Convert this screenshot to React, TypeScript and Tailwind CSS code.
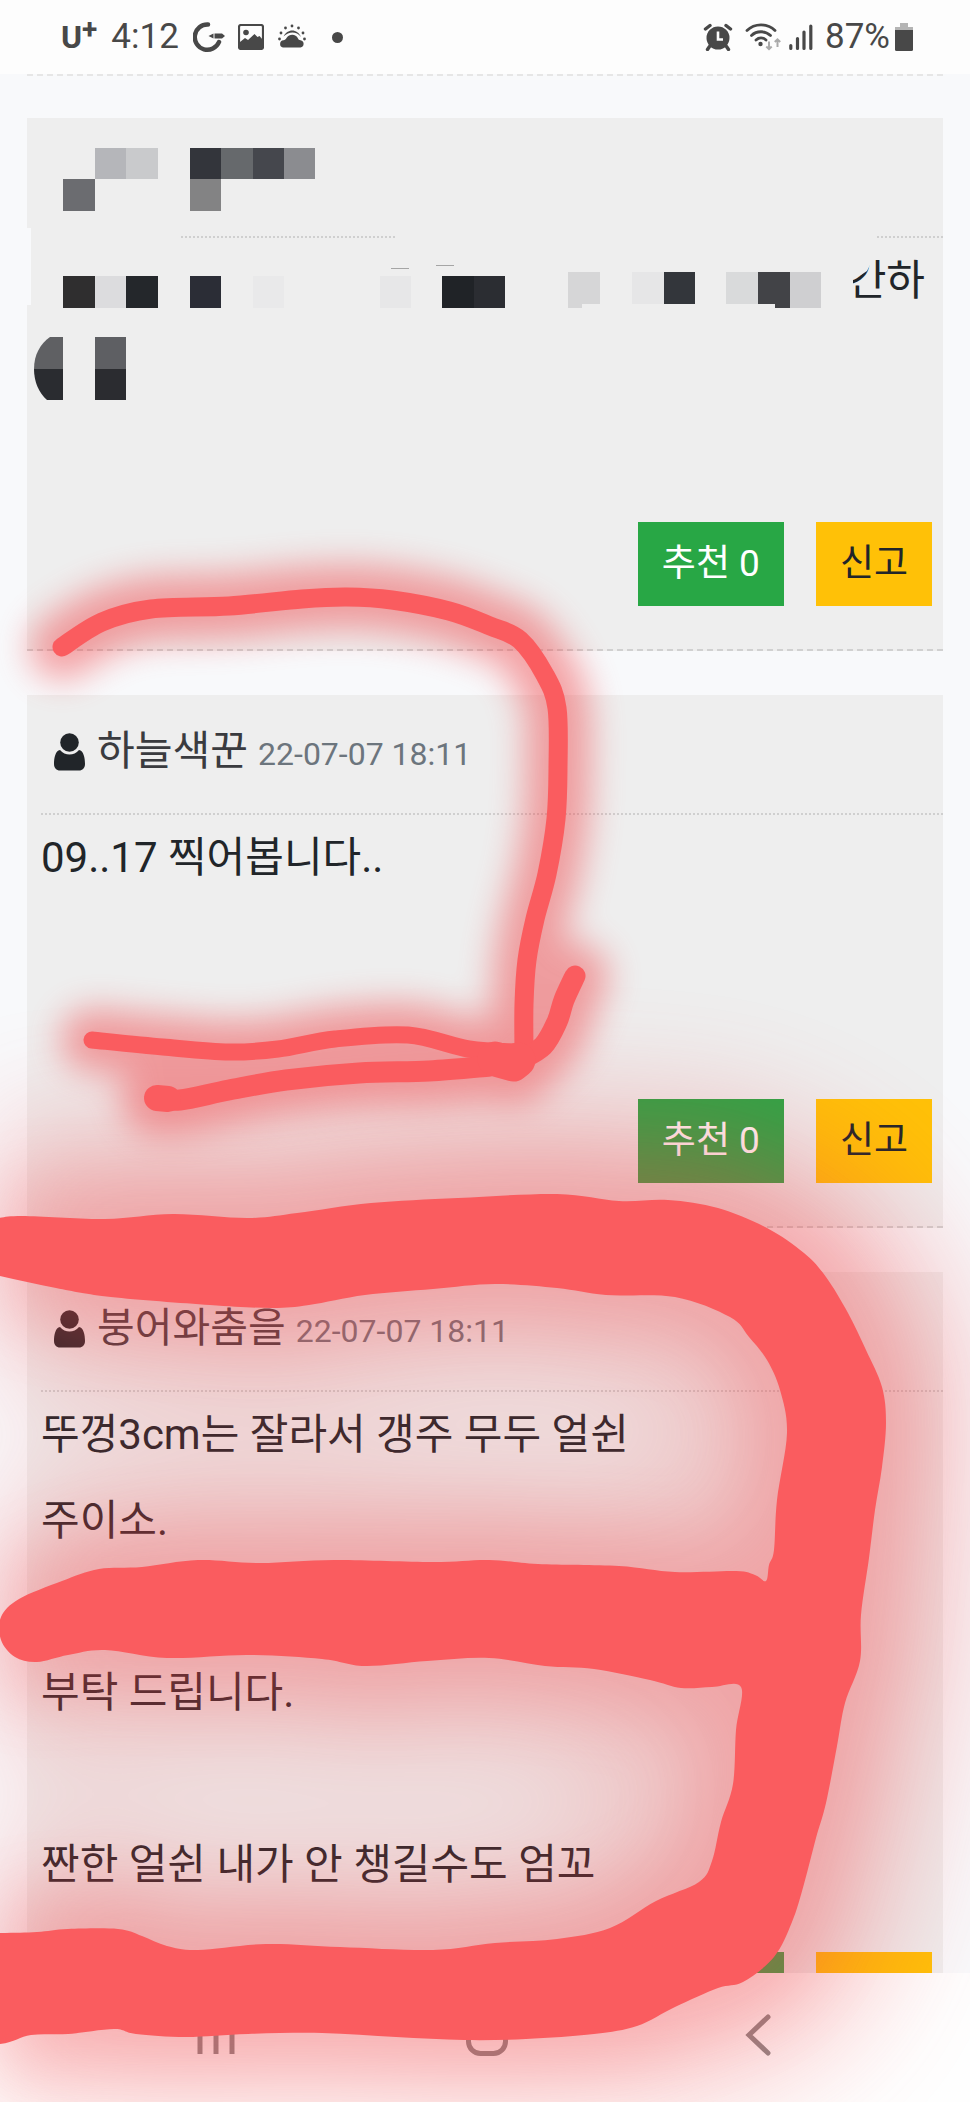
import React from "react";

type Point = [number, number];

interface Comment {
  id: number;
  author: string;
  date: string;
  lines: string[];
  votes: number;
  masked?: boolean;
}

const comments: Comment[] = [
  {
    id: 1,
    author: "",
    date: "",
    lines: ["간하"],
    votes: 0,
    masked: true,
  },
  {
    id: 2,
    author: "하늘색꾼",
    date: "22-07-07 18:11",
    lines: ["09..17 찍어봅니다.."],
    votes: 0,
  },
  {
    id: 3,
    author: "붕어와춤을",
    date: "22-07-07 18:11",
    lines: [
      "뚜껑3cm는 잘라서 갱주 무두 얼쉰",
      "주이소.",
      "",
      "부탁 드립니다.",
      "",
      "짠한 얼쉰 내가 안 챙길수도 엄꼬",
    ],
    votes: 0,
  },
];

// x, y, width, height, fill - measured from the card's top left corner
const mosaic: [number, number, number, number, string][] = [
  [68, 30, 31, 31, "#b5b6ba"],
  [99, 30, 32, 31, "#c9cacc"],
  [163, 30, 31, 31, "#33353b"],
  [194, 30, 32, 31, "#66696c"],
  [226, 30, 31, 31, "#45474d"],
  [257, 30, 31, 31, "#8b8c90"],
  [36, 61, 32, 32, "#6b6c70"],
  [163, 61, 31, 32, "#838384"],
  [36, 158, 32, 32, "#2f2e2f"],
  [68, 158, 31, 32, "#dcdcde"],
  [99, 158, 32, 32, "#24272b"],
  [163, 158, 31, 32, "#2b2d36"],
  [226, 158, 31, 32, "#e9e9ea"],
  [353, 158, 31, 32, "#e7e7e8"],
  [415, 158, 32, 32, "#202327"],
  [447, 158, 31, 32, "#2b2d32"],
  [541, 154, 32, 32, "#d6d6d7"],
  [541, 186, 14, 4, "#d6d6d7"],
  [605, 154, 32, 32, "#e6e6e7"],
  [637, 154, 31, 32, "#33363b"],
  [699, 154, 32, 32, "#d9dadb"],
  [731, 154, 32, 32, "#424347"],
  [748, 186, 15, 4, "#424347"],
  [763, 154, 31, 36, "#cfcfd1"],
  [364, 150, 18, 1, "#a5a5a5"],
  [409, 147, 18, 1, "#a5a5a5"],
  [68, 219, 31, 32, "#5e5f63"],
  [68, 251, 31, 31, "#2b2c30"],
];

// Catmull-Rom spline through the points
const spline = (points: Point[], closed = false) => {
  const n = points.length;
  const at = (i: number) =>
    closed ? points[(i + n) % n] : points[Math.max(0, Math.min(n - 1, i))];
  let d = `M${points[0][0]} ${points[0][1]}`;
  for (let i = 0; i < (closed ? n : n - 1); i++) {
    const [a, b, c, e] = [at(i - 1), at(i), at(i + 1), at(i + 2)];
    d += `C${b[0] + (c[0] - a[0]) / 6} ${b[1] + (c[1] - a[1]) / 6} ${
      c[0] - (e[0] - b[0]) / 6
    } ${c[1] - (e[1] - b[1]) / 6} ${c[0]} ${c[1]}`;
  }
  return closed ? d + "Z" : d;
};

const brush = spline(
  [
    [-60, 1222], [-10, 1219], [22, 1216], [105, 1219], [173, 1214], [248, 1218],
    [297, 1213], [371, 1203], [458, 1198], [557, 1194], [619, 1201], [668, 1200],
    [718, 1208], [767, 1228], [804, 1253], [826, 1277], [848, 1313], [866, 1350],
    [882, 1387], [886, 1423], [882, 1467], [875, 1510], [869, 1558], [861, 1615],
    [860, 1661], [845, 1703], [837, 1746], [826, 1803], [816, 1838], [804, 1884],
    [792, 1922], [774, 1957], [743, 1982], [718, 1988], [675, 2007], [637, 2026],
    [594, 2034], [526, 2039], [464, 2040], [396, 2037], [322, 2033], [248, 2034],
    [186, 2037], [136, 2034], [114, 2029], [68, 2034], [31, 2035], [0, 2044],
    [-60, 2046], [-60, 1933], [0, 1933], [37, 1932], [68, 1929], [118, 1929],
    [142, 1936], [167, 1946], [198, 1950], [266, 1944], [340, 1947], [433, 1950],
    [495, 1943], [557, 1939], [610, 1928], [656, 1901], [699, 1882], [712, 1861],
    [721, 1822], [733, 1784], [736, 1730], [741, 1687], [712, 1687], [681, 1688],
    [650, 1680], [594, 1669], [545, 1666], [489, 1658], [427, 1661], [365, 1666],
    [322, 1659], [248, 1655], [167, 1658], [105, 1650], [68, 1655], [37, 1662],
    [15, 1657], [1, 1640], [1, 1617], [19, 1599], [62, 1581], [99, 1569],
    [142, 1567], [198, 1560], [260, 1563], [334, 1560], [433, 1562], [489, 1560],
    [538, 1564], [619, 1566], [675, 1572], [736, 1571], [755, 1575], [766, 1581],
    [769, 1565], [774, 1550], [777, 1500], [787, 1433], [780, 1390], [767, 1360],
    [749, 1337], [730, 1317], [675, 1297], [606, 1295], [557, 1288], [495, 1284],
    [433, 1289], [365, 1295], [309, 1305], [272, 1308], [210, 1305], [111, 1297],
    [56, 1288], [0, 1276], [-60, 1262],
  ],
  true
);

const pen: { d: string; width: number }[] = [
  {
    width: 19,
    d: spline([
      [62, 647], [102, 622], [151, 609], [229, 606], [302, 599], [347, 597],
      [392, 600], [449, 611], [490, 626], [520, 640], [545, 675], [557, 708],
      [558, 767], [556, 819], [547, 874], [535, 919], [527, 960], [524, 1004],
      [524, 1055],
    ]),
  },
  {
    width: 17,
    d: spline([
      [92, 1040], [163, 1047], [229, 1052], [278, 1049], [335, 1039],
      [408, 1035], [469, 1049], [518, 1052],
    ]),
  },
  {
    width: 21,
    d: spline([[520, 1060], [543, 1046], [557, 1022], [564, 1000], [575, 976]]),
  },
  {
    width: 21,
    d: spline([
      [157, 1098], [180, 1100], [229, 1090], [286, 1080], [359, 1073],
      [429, 1071], [490, 1066],
    ]),
  },
  { width: 26, d: "M157 1098 168 1099" },
  { width: 35, d: "M495 1059 513 1064 518 1060" },
];

const Scribble: React.FC = () => {
  return (
    <svg
      className="pointer-events-none absolute inset-0 h-full w-full"
      viewBox="0 0 970 2102"
      preserveAspectRatio="none"
      fill="none"
      aria-hidden="true"
    >
      <defs>
        <clipPath id="canvas">
          <rect x="0" y="0" width="970" height="2102" />
        </clipPath>
        <filter
          id="haze"
          filterUnits="userSpaceOnUse"
          x="-300"
          y="800"
          width="1600"
          height="1600"
          colorInterpolationFilters="sRGB"
        >
          <feGaussianBlur stdDeviation="56" />
        </filter>
        <filter
          id="wide"
          filterUnits="userSpaceOnUse"
          x="-300"
          y="800"
          width="1600"
          height="1600"
          colorInterpolationFilters="sRGB"
        >
          <feGaussianBlur stdDeviation="34" />
        </filter>
        <filter
          id="narrow"
          filterUnits="userSpaceOnUse"
          x="-50"
          y="450"
          width="800"
          height="800"
          colorInterpolationFilters="sRGB"
        >
          <feGaussianBlur stdDeviation="17" />
        </filter>
      </defs>
      <g filter="url(#haze)" opacity="0.26">
        <g clipPath="url(#canvas)">
          <path d={brush} fill="#f04448" stroke="#f04448" strokeWidth="200" strokeLinejoin="round" />
        </g>
      </g>
      <g filter="url(#wide)" opacity="0.22">
        <g clipPath="url(#canvas)">
          <path d={brush} fill="#f04448" stroke="#f04448" strokeWidth="70" strokeLinejoin="round" />
        </g>
      </g>
      <g filter="url(#narrow)" opacity="0.48">
        {pen.map((line) => (
          <path
            key={line.d}
            d={line.d}
            stroke="#f04448"
            strokeWidth={line.width + 46}
            strokeLinecap="round"
            strokeLinejoin="round"
          />
        ))}
      </g>
      <path d={brush} fill="#fa5c5f" />
      {pen.map((line) => (
        <path
          key={line.d}
          d={line.d}
          stroke="#fa5c5f"
          strokeWidth={line.width}
          strokeLinecap="round"
          strokeLinejoin="round"
        />
      ))}
    </svg>
  );
};

const StatusBar: React.FC = () => {
  return (
    <header className="flex h-[74px] shrink-0 items-center justify-between bg-[#fdfdfd] pl-[61px] pr-[56px] text-[35px] leading-[40px] text-[#484848]">
      <div className="flex items-center">
        <span className="flex items-start text-[32px] font-bold">
          <span>U</span>
          <span className="text-[28px] leading-[26px]">+</span>
        </span>
        <span className="ml-[14px]">4:12</span>
        <svg className="ml-[14px] h-8 w-[33px]" viewBox="0 0 33 32" fill="none" aria-hidden="true">
          <path d="M15 3.600A12.600 12.600 0 1 0 26 21" stroke="currentColor" strokeWidth="4.500" strokeLinecap="round" />
          <path d="M15.500 15l5-2.500v5z" fill="currentColor" />
          <path d="M21.500 12.500H29l3 2.500-3 2.500h-7.500z" fill="currentColor" />
        </svg>
        <svg className="ml-3 h-[26px] w-[26px]" viewBox="0 0 26 26" aria-hidden="true">
          <rect x="1" y="1" width="24" height="24" rx="2" fill="none" stroke="currentColor" strokeWidth="2.200" />
          <circle cx="8" cy="8.500" r="2.800" fill="currentColor" />
          <path d="M2 18l5-4 3 2 6.500-6 3 3 2-1L25 16v9H2z" fill="currentColor" />
        </svg>
        <svg className="ml-3 h-8 w-8" viewBox="0 0 32 32" aria-hidden="true">
          <path
            d="M7 26.500a3.700 3.700 0 0 1 .5-7.300C9 19 9.500 18.500 10.500 17c3-4.500 9.500-4 11.500.5.600 1.300 1 1.600 2.500 1.700a3.700 3.700 0 0 1 0 7.300z"
            fill="currentColor"
          />
          <path d="M7.500 15.500C11 7.500 21.500 7 25 16c-4.500-5.500-11.500-6-17.500-.5z" fill="currentColor" />
          <g fill="currentColor">
            <circle cx="16" cy="5" r="1.400" />
            <circle cx="9.500" cy="7" r="1.400" />
            <circle cx="22.500" cy="7" r="1.400" />
            <circle cx="5" cy="12" r="1.400" />
            <circle cx="27" cy="12" r="1.400" />
            <circle cx="3.500" cy="18" r="1.400" />
            <circle cx="28.500" cy="18" r="1.400" />
          </g>
        </svg>
        <span className="ml-6 h-[11px] w-[11px] rounded-full bg-[#484848]" />
      </div>

      <div className="flex items-center">
        <svg className="h-[28px] w-[30px]" viewBox="0 0 30 28" fill="none" aria-hidden="true">
          <circle cx="15" cy="15" r="11.500" fill="currentColor" />
          <path d="M2.500 6 7 2.500M27.500 6 23 2.500M6.500 23.500l-2 3M23.500 23.500l2 3" stroke="currentColor" strokeWidth="3.400" strokeLinecap="round" />
          <path d="M15 8.500v8h5" stroke="#fdfdfd" strokeWidth="2.600" />
        </svg>
        <svg className="ml-3 h-[30px] w-[36px]" viewBox="0 0 36 30" fill="none" aria-hidden="true">
          <g stroke="currentColor" strokeWidth="2.800" strokeLinecap="round">
            <path d="M2 8.500c7.500-7.500 20.500-7.500 28 0" />
            <path d="M6.500 13.500c5-5 14-5 19 0" />
            <path d="M11 18c3-2.800 7-2.800 10 0" />
          </g>
          <circle cx="15.500" cy="22" r="2.200" fill="currentColor" />
          <path d="M24 19.500v7.500m-2.700-2.500 2.700 2.700 2.700-2.700M32.500 25v-7.500m-2.700 2.500 2.700-2.700 2.700 2.700" stroke="#aaa" strokeWidth="2" />
        </svg>
        <svg className="ml-2 h-[28px] w-[24px]" viewBox="0 0 24 28" aria-hidden="true">
          <path
            d="M1.800 22.500v3M8.500 15.500v10M15 9v16.500M21.800 3v22.500"
            stroke="currentColor"
            strokeWidth="3.200"
            strokeLinecap="round"
          />
        </svg>
        <span className="ml-3">87%</span>
        <svg className="ml-1 h-[30px] w-[20px]" viewBox="0 0 20 30" aria-hidden="true">
          <path d="M6 1h8v4h5v3H1V5h5z" fill="#b4b4b4" />
          <path d="M1 8h18v19.500a1.500 1.500 0 0 1-1.500 1.500h-15A1.500 1.500 0 0 1 1 27.500z" fill="currentColor" />
        </svg>
      </div>
    </header>
  );
};

const UserIcon: React.FC = () => {
  return (
    <svg className="h-[38px] w-[31px] shrink-0 text-[#212529]" viewBox="0 0 31 38" fill="currentColor" aria-hidden="true">
      <circle cx="15.500" cy="9.500" r="9.300" />
      <path d="M6 17c5 6 14 6 19 0C29.500 17.500 31 25 31 31c0 4-2.500 6.500-6 6.500H6C2.500 37.500 0 35 0 31c0-6 1.500-13.500 6-14z" />
    </svg>
  );
};

const Mosaic: React.FC = () => {
  return (
    <svg className="absolute left-0 top-0 h-[300px] w-[916px]" viewBox="0 0 916 300" aria-hidden="true">
      <rect x="14" y="116" width="138" height="6" fill="#eee" />
      <rect x="370" y="116" width="480" height="6" fill="#eee" />
      <rect x="0" y="110" width="4" height="77" fill="#f8f9fb" />
      {mosaic.map(([x, y, width, height, fill]) => (
        <rect key={`${x}-${y}`} x={x} y={y} width={width} height={height} fill={fill} />
      ))}
      <path d="M36 219v32H7c0-14 6-25 16-32z" fill="#5f6063" />
      <path d="M36 251v31H20C12 275 7 264 7 251z" fill="#2a2c30" />
      <path d="M814 138h29v9l-3 6-6 4-8 2v8h-12z" fill="#eee" />
    </svg>
  );
};

const CommentCard: React.FC<{ comment: Comment }> = ({ comment }) => {
  return (
    <article className="relative mb-[44px] border-b-2 border-dashed border-[#d0d0d0] bg-[#eee] pb-[43px]">
      <div className="ml-[14px] flex h-[120px] items-center border-b-2 border-dotted border-[#cfcfcf] pb-1 pl-[13px]">
        {!comment.masked && (
          <>
            <UserIcon />
            <h2 className="ml-3 text-[41px] leading-[60px] text-[#3a3b3f]">
              {comment.author}{" "}
              <time className="text-[32px] text-[#6c757d]">{comment.date}</time>
            </h2>
          </>
        )}
      </div>
      <div
        className={`min-h-[240px] pl-[14px] text-[42px] leading-[86px] text-[#212529] ${
          comment.masked ? "pr-[18px] text-right" : ""
        }`}
      >
        {comment.lines.map((line, i) => (
          <p key={i} className="min-h-[86px]">
            {line}
          </p>
        ))}
      </div>
      <div className="mt-[44px] flex justify-end gap-8 pr-[11px] text-[37px] leading-[84px]">
        <button className="bg-[#28a745] px-6 text-white">추천 {comment.votes}</button>
        <button className="bg-[#ffc107] px-6 text-[#212529]">신고</button>
      </div>
      {comment.masked && <Mosaic />}
    </article>
  );
};

const NavBar: React.FC = () => {
  return (
    <nav className="grid h-[129px] shrink-0 grid-cols-3 bg-[#fefefe] pb-[5px] pl-[80px] pr-[76px] text-[#8a8a8a]">
      <button aria-label="Recent apps" className="flex items-center justify-center">
        <svg className="h-[42px] w-[42px]" viewBox="0 0 42 42" fill="none" stroke="currentColor" strokeWidth="5">
          <path d="M5 2v38M21 2v38M37 2v38" />
        </svg>
      </button>
      <button aria-label="Home" className="flex items-center justify-center">
        <svg className="h-[42px] w-[42px]" viewBox="0 0 42 42" fill="none" stroke="currentColor" strokeWidth="5">
          <rect x="2.500" y="2.500" width="37" height="37" rx="12" />
        </svg>
      </button>
      <button aria-label="Back" className="flex items-center justify-center">
        <svg className="h-[42px] w-[26px]" viewBox="0 0 26 42" fill="none" stroke="currentColor" strokeWidth="5">
          <path d="M23 3 4 21l19 18" strokeLinecap="round" />
        </svg>
      </button>
    </nav>
  );
};

const App: React.FC = () => {
  return (
    <div className="relative flex h-screen flex-col overflow-hidden bg-[#f8f9fb] font-[Roboto,'Noto_Sans_CJK_KR',sans-serif]">
      <StatusBar />
      <main className="min-h-0 flex-1 overflow-hidden px-[27px]">
        <div className="mb-[42px] border-t-2 border-dashed border-[#e6e6e6]" />
        {comments.map((comment) => (
          <CommentCard key={comment.id} comment={comment} />
        ))}
      </main>
      <NavBar />
      <Scribble />
    </div>
  );
};

export default App;
